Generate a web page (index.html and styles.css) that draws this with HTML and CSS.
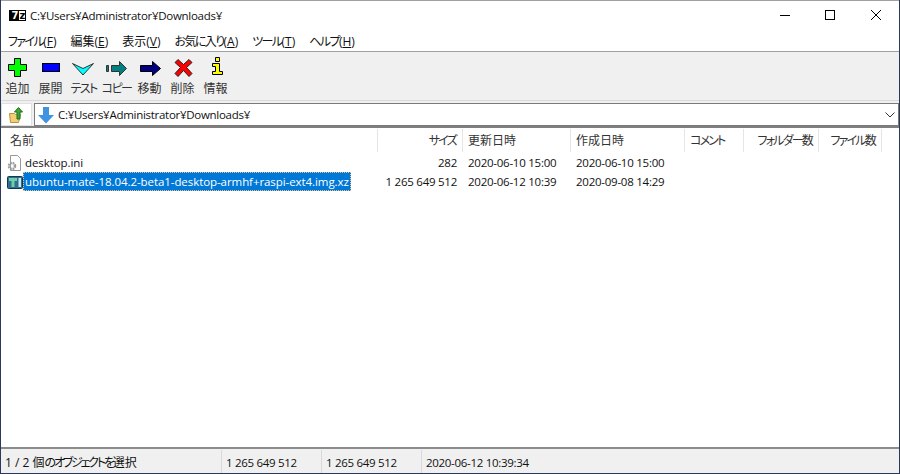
FILE: index.html
```html
<!DOCTYPE html>
<html lang="ja">
<head>
    <meta charset="UTF-8">
    <title>C:¥Users¥Administrator¥Downloads¥</title>
    <link rel="stylesheet" href="styles.css">
</head>
<body>
<div class="ventana">
    <div class="titulo">
        <svg class="logo" width="17" height="11" viewBox="0 0 17 11">
            <rect x="0.5" y="0.5" width="16" height="10" fill="#fff" stroke="#000"/>
            <rect x="1" y="1" width="9" height="9" fill="#000"/>
            <text x="2.500" y="9" class="logo-7">7</text>
            <text x="10.500" y="9" class="logo-z">z</text>
        </svg>
        <span class="titulo-texto">C:¥Users¥Administrator¥Downloads¥</span>
        <div class="controles">
            <svg width="46" height="29" viewBox="0 0 46 29"><path d="M19 14.500h10" stroke="#000"/></svg>
            <svg width="46" height="29" viewBox="0 0 46 29"><rect x="18.500" y="9.500" width="9" height="9" fill="none" stroke="#000"/></svg>
            <svg width="46" height="29" viewBox="0 0 46 29"><path d="M18 9l10 10M28 9l-10 10" stroke="#000"/></svg>
        </div>
    </div>

    <div class="menu">
        <span class="menu-item"><span class="kana">ファイル</span>(<u>F</u>)</span>
        <span class="menu-item">編集(<u>E</u>)</span>
        <span class="menu-item">表示(<u>V</u>)</span>
        <span class="menu-item"><span class="kana">お気に入り</span>(<u>A</u>)</span>
        <span class="menu-item"><span class="kana">ツール</span>(<u>T</u>)</span>
        <span class="menu-item"><span class="kana">ヘルプ</span>(<u>H</u>)</span>
    </div>

    <div class="herramientas">
        <div class="boton">
            <svg width="24" height="24" viewBox="0 0 24 24"><path d="M8.500 3.500h6v6h6v6h-6v6h-6v-6h-6v-6h6z" fill="#00ff00" stroke="#000"/></svg>
            <span>追加</span>
        </div>
        <div class="boton">
            <svg width="24" height="24" viewBox="0 0 24 24"><rect x="3.500" y="8.500" width="17" height="8" fill="#0000ff" stroke="#000"/></svg>
            <span>展開</span>
        </div>
        <div class="boton">
            <svg width="24" height="24" viewBox="0 0 24 24"><path d="M0.500 8.500L11 13.500l10.500-5L11 20z" fill="#00ffff" stroke="#333"/></svg>
            <span class="kana">テスト</span>
        </div>
        <div class="boton">
            <svg width="24" height="24" viewBox="0 0 24 24"><path d="M1.500 10.500h2v6h-2zM6.500 10.500h8v-4l7 7-7 7v-4h-8z" fill="#008080" stroke="#333"/></svg>
            <span class="kana">コピー</span>
        </div>
        <div class="boton">
            <svg width="24" height="24" viewBox="0 0 24 24"><path d="M2.500 10.500h12v-4l8 7-8 7v-4h-12z" fill="#000080" stroke="#000"/></svg>
            <span>移動</span>
        </div>
        <div class="boton">
            <svg width="24" height="24" viewBox="0 0 24 24"><path d="M7 4.500l5.500 5 5.500-5 3 3-5.500 5 5.500 6-3 3-5.500-6-5.500 6-3-3 5.500-6-5.500-5z" fill="#ff0000" stroke="#222"/></svg>
            <span>削除</span>
        </div>
        <div class="boton">
            <svg width="24" height="24" viewBox="0 0 24 24"><path d="M11.500 2.500h4v4h-4zM8.500 8.500h7v8h3v3h-10v-3h3v-5h-3z" fill="#ffff00" stroke="#000"/></svg>
            <span>情報</span>
        </div>
    </div>

    <div class="direccion">
        <div class="subir">
            <svg width="18" height="18" viewBox="0 0 18 18">
                <path d="M1.500 7.500h5l1 1h5l-2 8h-8z" fill="#f2cf73" stroke="#b9933c"/>
                <path d="M9 13V6H6.500l4-4.500 4 4.500H12v7z" fill="#3fa535" stroke="#1f6f1c"/>
            </svg>
        </div>
        <div class="ruta">
            <svg width="18" height="18" viewBox="0 0 18 18"><path d="M6 1h6v8h5l-8 8.500L1 9h5z" fill="#3f93e0"/></svg>
            <span class="ruta-texto">C:¥Users¥Administrator¥Downloads¥</span>
            <svg class="flecha" width="10" height="6" viewBox="0 0 10 6"><path d="M0.500 0.500L5 5l4.500-4.500" fill="none" stroke="#333"/></svg>
        </div>
    </div>

    <div class="lista">
        <div class="fila cabecera">
            <span class="col-nombre">名前</span>
            <span class="col-size kana-col">サイズ</span>
            <span class="col-fecha">更新日時</span>
            <span class="col-creado">作成日時</span>
            <span class="col-comentario kana-col">コメント</span>
            <span class="col-carpetas kana-col">フォルダー数</span>
            <span class="col-archivos kana-col">ファイル数</span>
        </div>
        <div class="fila">
            <span class="col-nombre">
                <svg width="16" height="16" viewBox="0 0 16 16">
                    <path d="M3.500 0.500h7l3 3v12h-10z" fill="#fff" stroke="#999"/>
                    <circle cx="5" cy="11" r="3" fill="none" stroke="#999" stroke-width="2.500" stroke-dasharray="1.600 0.800"/>
                    <circle cx="5" cy="11" r="1.200" fill="#fff"/>
                </svg>
                <span class="nombre">desktop.ini</span>
            </span>
            <span class="col-size">282</span>
            <span class="col-fecha">2020-06-10 15:00</span>
            <span class="col-creado">2020-06-10 15:00</span>
        </div>
        <div class="fila">
            <span class="col-nombre">
                <svg width="16" height="16" viewBox="0 0 16 16">
                    <rect x="0.500" y="2.500" width="15" height="12" rx="1" fill="#2f6f8f" stroke="#12384f"/>
                    <path d="M2 4h8v3H7.500v6h-3V7H2z" fill="#6fd0a8"/>
                    <path d="M11.500 4h2.500v9h-2.500z" fill="#cfe8f0"/>
                </svg>
                <span class="nombre seleccionado">ubuntu-mate-18.04.2-beta1-desktop-armhf+raspi-ext4.img.xz</span>
            </span>
            <span class="col-size">1 265 649 512</span>
            <span class="col-fecha">2020-06-12 10:39</span>
            <span class="col-creado">2020-09-08 14:29</span>
        </div>
    </div>

    <div class="estado">
        <span class="est-1">1 / 2 個<span class="kana-larga">のオブジェクトを</span>選択</span>
        <span class="est-2">1 265 649 512</span>
        <span class="est-2">1 265 649 512</span>
        <span class="est-3">2020-06-12 10:39:34</span>
    </div>
</div>
</body>
</html>
```

FILE: styles.css
```css
/* Estilos generales */
html, body {
    margin: 0;
    padding: 0;
}

body {
    width: 900px;
    height: 474px;
    overflow: hidden;
    font-family: "Open Sans", "Noto Sans CJK JP", sans-serif;
    font-size: 12px;
    font-feature-settings: "palt";
    color: #111;
    background-color: #2b3a5c;
}

/* La fuente de la captura tiene kana mas estrechos */
.kana {
    letter-spacing: -1.6px;
}

.kana-col {
    letter-spacing: -1.8px;
}

.kana-larga {
    letter-spacing: -2.2px;
}

.ventana {
    display: flex;
    flex-direction: column;
    height: 473px;
    margin: 0 1px;
    box-sizing: border-box;
    border-top: 1px solid #a0a0a0;
    background-color: #f0f0f0;
}

/* Barra de titulo */
.titulo {
    display: flex;
    align-items: center;
    height: 29px;
    padding-left: 8px;
    background-color: #fff;
}

.logo-7,
.logo-z {
    font-family: "DejaVu Sans", sans-serif;
    font-size: 10px;
    font-weight: bold;
}

.logo-7 {
    fill: #fff;
}

.logo-z {
    fill: #000;
}

.titulo-texto {
    margin-left: 4px;
    font-size: 11.5px;
    letter-spacing: -0.28px;
}

.controles {
    display: flex;
    margin-left: auto;
}

/* Menu */
.menu {
    display: flex;
    height: 21px;
    align-items: center;
    padding-left: 7px;
    gap: 14px;
    background-color: #fff;
    border-bottom: 1px solid #a0a0a0;
}

/* Barra de herramientas */
.herramientas {
    display: flex;
    height: 48px;
    border-bottom: 1px solid #d8d8d8;
}

.boton {
    display: flex;
    flex-direction: column;
    align-items: center;
    width: 33px;
    padding-top: 3px;
    color: #333;
    white-space: nowrap;
}

.boton svg {
    flex-shrink: 0;
}

/* Direccion */
.direccion {
    display: flex;
    height: 23px;
    padding-top: 2px;
}

.subir {
    display: flex;
    align-items: center;
    justify-content: center;
    width: 31px;
    margin-right: 2px;
    background-color: #fff;
    border: 1px solid #e0e0e0;
    box-sizing: border-box;
}

.ruta {
    flex: 1;
    display: flex;
    align-items: center;
    gap: 3px;
    padding: 0 3px 0 2px;
    background-color: #fff;
    border: 1px solid #7a7a7a;
}

.ruta-texto {
    font-size: 11.5px;
    letter-spacing: -0.28px;
}

.flecha {
    margin-left: auto;
}

/* Lista de archivos */
.lista {
    flex: 1;
    background-color: #fff;
    border-top: 2px solid #7f7f7f;
    border-bottom: 2px solid #8c8c8c;
}

.fila {
    display: flex;
    height: 19px;
    align-items: center;
    white-space: nowrap;
}

.cabecera {
    height: 25px;
    color: #333;
}

.cabecera span {
    height: 23px;
    line-height: 23px;
    border-right: 1px solid #e5e5e5;
}

.col-nombre {
    display: flex;
    align-items: center;
    width: 377px;
    padding-left: 6px;
    box-sizing: border-box;
}

.cabecera .col-nombre {
    padding-left: 9px;
}

.col-size {
    width: 85px;
    padding-right: 6px;
    text-align: right;
    box-sizing: border-box;
}

.col-fecha {
    width: 108px;
    padding-left: 5px;
    box-sizing: border-box;
}

.col-creado {
    width: 114px;
    padding-left: 5px;
    box-sizing: border-box;
}

.col-comentario {
    width: 59px;
    padding-left: 5px;
    box-sizing: border-box;
}

.col-carpetas {
    width: 75px;
    padding-right: 6px;
    text-align: right;
    box-sizing: border-box;
}

.col-archivos {
    width: 63px;
    padding-right: 6px;
    text-align: right;
    box-sizing: border-box;
}

.fila:not(.cabecera) .col-size,
.fila:not(.cabecera) .col-fecha,
.fila:not(.cabecera) .col-creado {
    font-size: 11.5px;
    letter-spacing: -0.25px;
}

.nombre {
    padding: 0 2px;
    line-height: 19px;
    font-size: 11.5px;
    letter-spacing: -0.07px;
}

.seleccionado {
    background-color: #0078d7;
    color: #fff;
    outline: 1px dotted #f0c080;
    outline-offset: -1px;
}

/* Barra de estado */
.estado {
    display: flex;
    height: 24px;
    flex-shrink: 0;
}

.est-1,
.est-2,
.est-3 {
    height: 23px;
    margin-top: 1px;
    line-height: 25px;
    padding-left: 4px;
    border-right: 1px solid #d8d8d8;
    box-sizing: border-box;
}

.est-1 {
    width: 221px;
}

.est-2 {
    width: 100px;
    font-size: 11.5px;
    letter-spacing: -0.3px;
}

.est-3 {
    flex: 1;
    border-right: none;
    font-size: 11.5px;
    letter-spacing: -0.3px;
}
```
